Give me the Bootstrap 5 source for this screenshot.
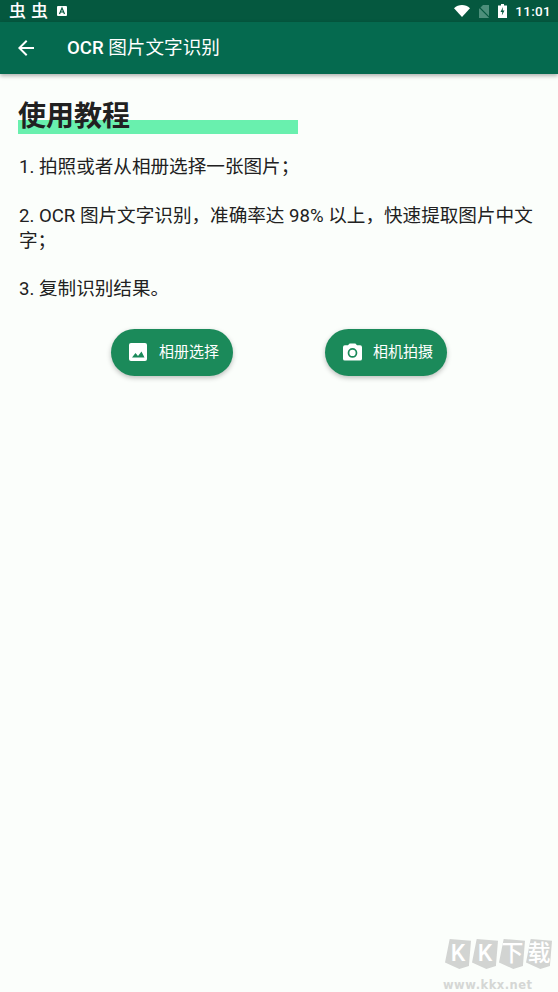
<!doctype html>
<html lang="zh">
<head>
<meta charset="utf-8">
<title>OCR 图片文字识别</title>
<link href="https://cdn.jsdelivr.net/npm/bootstrap@5.3.0/dist/css/bootstrap.min.css" rel="stylesheet">
<style>
html,body{height:100%}
body{background:#fbfefb;color:#212121;font-family:Roboto,"Noto Sans CJK SC",sans-serif;overflow:hidden;position:relative}
.status-strip{height:22px;background:#05583f;color:#fff;padding:0 7px 0 9px;font-size:13px}
.bug-glyph{font-weight:500;font-size:17px;line-height:22px;margin-right:5px;width:17px;text-align:center}
.clock-text{font-size:13.5px;font-weight:500;letter-spacing:.3px}
.app-strip{height:52px;background:#056a4f;color:#fff;padding-left:18px;box-shadow:0 2px 4px rgba(0,0,0,.3);position:relative}
.app-title{font-size:18.6px;font-weight:400;margin-left:33px;line-height:1}
.app-title b{font-weight:500}
.page-body{padding:25px 18px 0}
.guide-head{position:relative;height:35px}
.head-mark{position:absolute;left:0;top:21px;width:280px;height:14px;background:#69f0ae}
.head-text{position:relative;font-size:28px;font-weight:700;line-height:36px;margin:0;color:#212121}
.step-line{font-size:18.6px;line-height:25px;margin:0 0 23.5px;padding-left:1px}
.step-first{margin-top:21px}
.action-row{margin-top:-1px;padding-top:4px;gap:92px}
.pill-btn{width:122px;height:47px;border-radius:24px;background:#1b8a5a;color:#fff;font-size:15px;border:0;padding:0 0 0 17px;gap:11px;box-shadow:0 2px 5px rgba(0,0,0,.25)}
.pill-btn:hover{background:#1b8a5a;color:#fff}
.icon-slot{width:20px}
.kk-mark{position:absolute;left:443px;top:939px;width:115px}
.kk-row{gap:1px;padding-left:2px}
.kk-tile{width:26px;height:30px;background:#d2d4d2;color:#fff;font-weight:500;font-size:23px;line-height:30px;text-align:center;clip-path:polygon(18% 0,100% 6%,92% 90%,55% 100%,0 78%)}
.kk-url{font-family:"DejaVu Sans",sans-serif;font-weight:700;color:#d5d7d5;font-size:11.5px;letter-spacing:.5px;line-height:12px;margin-top:10px;white-space:nowrap}
</style>
</head>
<body>
<div class="status-strip d-flex align-items-center">
  <span class="bug-glyph">虫</span><span class="bug-glyph">虫</span>
  <svg width="10" height="10" viewBox="0 0 10 10" class="ms-1"><rect width="10" height="10" rx="1" fill="#fff"/><path d="M2.5 8 5 2l2.5 6M3.5 6h3" stroke="#05583f" stroke-width="1.2" fill="none"/></svg>
  <span class="ms-auto d-flex align-items-center">
    <svg width="16" height="12" viewBox="0 0 16 12"><path d="M0 3.2C4.500-1 11.500-1 16 3.200L8 12Z" fill="#fff"/></svg>
    <svg width="12" height="13" viewBox="0 0 12 13" class="ms-2"><path d="M1 13V4l4-4h6v13Z" fill="#4d8f7b"/><path d="M0 1l12 12" stroke="#05583f" stroke-width="1.200"/></svg>
    <svg width="9" height="14" viewBox="0 0 9 14" class="ms-2"><path d="M3 0h3v1.500h3V14H0V1.500h3Z" fill="#fff"/><path d="M5 3 2.500 8H4.300L3.800 11.500 6.500 6.500H4.700Z" fill="#05583f"/></svg>
    <span class="clock-text ms-2">11:01</span>
  </span>
</div>
<div class="app-strip d-flex align-items-center">
  <svg width="16" height="16" viewBox="0 0 16 16"><path d="M16 7H3.800l5.600-5.600L8 0 0 8l8 8 1.400-1.400L3.800 9H16Z" fill="#fff"/></svg>
  <span class="app-title"><b>OCR</b> 图片文字识别</span>
</div>
<main class="page-body">
  <div class="guide-head"><div class="head-mark"></div><h1 class="head-text">使用教程</h1></div>
  <p class="step-line step-first">1. 拍照或者从相册选择一张图片；</p>
  <p class="step-line">2. OCR 图片文字识别，准确率达 98% 以上，快速提取图片中文字；</p>
  <p class="step-line">3. 复制识别结果。</p>
  <div class="action-row d-flex justify-content-center">
    <button class="btn pill-btn d-flex align-items-center" type="button">
      <span class="icon-slot d-flex justify-content-center"><svg width="18" height="18" viewBox="0 0 18 18"><path d="M2 0h14a2 2 0 0 1 2 2v14a2 2 0 0 1-2 2H2a2 2 0 0 1-2-2V2a2 2 0 0 1 2-2Z" fill="#fff"/><path d="M3 14.500 6.500 10l2.500 3 3.500-4.500 3 6Z" fill="#1b8a5a"/></svg></span>
      <span>相册选择</span>
    </button>
    <button class="btn pill-btn d-flex align-items-center" type="button">
      <span class="icon-slot d-flex justify-content-center"><svg width="19" height="18" viewBox="0 0 20 18"><path d="M7 0h6l1.800 2H18a2 2 0 0 1 2 2v12a2 2 0 0 1-2 2H2a2 2 0 0 1-2-2V4a2 2 0 0 1 2-2h3.200Z" fill="#fff"/><circle cx="10" cy="10" r="4.200" fill="none" stroke="#1b8a5a" stroke-width="1.800"/></svg></span>
      <span>相机拍摄</span>
    </button>
  </div>
</main>
<div class="kk-mark">
  <div class="kk-row d-flex"><span class="kk-tile">K</span><span class="kk-tile">K</span><span class="kk-tile">下</span><span class="kk-tile">载</span></div>
  <div class="kk-url">www.kkx.net</div>
</div>
</body>
</html>
